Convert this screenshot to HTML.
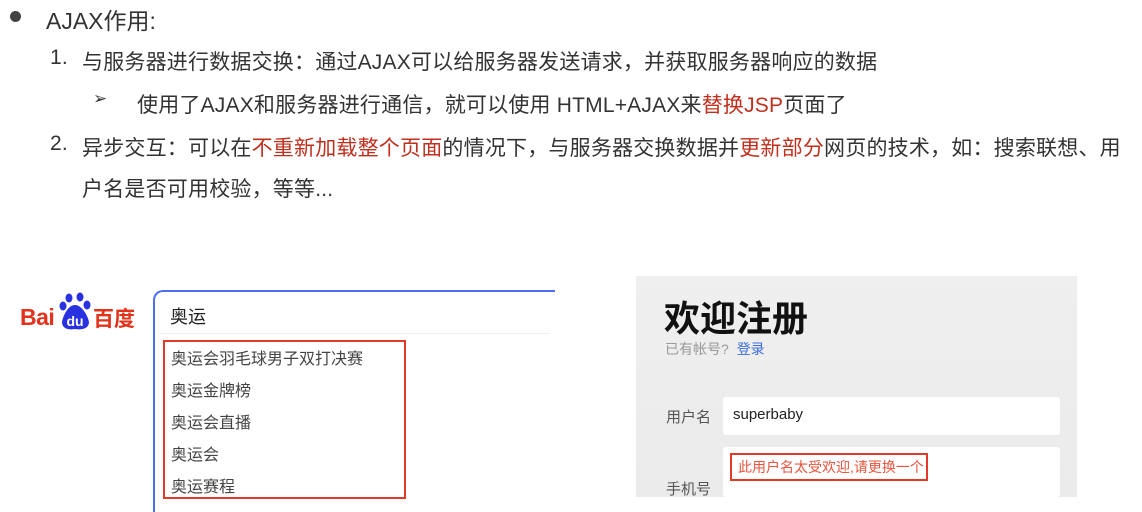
<!DOCTYPE html>
<html><head><meta charset="utf-8"><style>
body{margin:0;width:1142px;height:501px;background:#fff;position:relative;overflow:hidden;font-family:"Liberation Sans","Noto Sans CJK SC",sans-serif;color:#333}
.a{position:absolute;white-space:nowrap}
.t{font-size:21px;letter-spacing:0.2px}
.r{color:#c0301e}
</style></head><body>
<div class="a" style="left:10px;top:11px;width:11px;height:11px;border-radius:50%;background:#444"></div>
<div class="a" style="left:46px;top:2px;font-size:23px">AJAX作用:</div>
<div class="a t" style="left:50px;top:46px">1.</div>
<div class="a t" style="left:82px;top:46px">与服务器进行数据交换：通过AJAX可以给服务器发送请求，并获取服务器响应的数据</div>
<div class="a" style="left:93px;top:89px;font-size:17px">➢</div>
<div class="a t" style="left:137px;top:89px">使用了AJAX和服务器进行通信，就可以使用 HTML+AJAX来<span class="r">替换JSP</span>页面了</div>
<div class="a t" style="left:50px;top:132px">2.</div>
<div class="a t" style="left:82px;top:132px">异步交互：可以在<span class="r">不重新加载整个页面</span>的情况下，与服务器交换数据并<span class="r">更新部分</span>网页的技术，如：搜索联想、用</div>
<div class="a t" style="left:82px;top:173px">户名是否可用校验，等等...</div>

<!-- baidu -->
<div class="a" style="left:20px;top:304px;font-size:23px;font-weight:bold;color:#e3321c;letter-spacing:-0.5px">Bai</div>
<svg class="a" style="left:59px;top:292px" width="36" height="40" viewBox="0 0 36 40">
<ellipse cx="10" cy="6" rx="3.5" ry="4.5" fill="#2932e1"/><ellipse cx="21" cy="5" rx="3.5" ry="4.5" fill="#2932e1"/>
<ellipse cx="4" cy="14" rx="3.5" ry="4.5" fill="#2932e1"/><ellipse cx="28" cy="13" rx="3.5" ry="4.5" fill="#2932e1"/>
<path d="M16 13 C9 13 4 24 3 30 C3 37 10 38 16 37 C22 38 30 37 30 30 C29 24 23 13 16 13Z" fill="#2932e1"/>
<text x="16" y="34" text-anchor="middle" font-size="14" font-weight="bold" fill="#fff" font-family="Liberation Sans">du</text>
</svg>
<div class="a" style="left:93px;top:303px;font-size:21px;font-weight:bold;color:#e3321c">百度</div>

<div class="a" style="left:153px;top:290px;width:400px;height:220px;border:2px solid #4e6ef2;border-right:none;border-bottom:none;border-top-left-radius:10px"></div>
<div class="a" style="left:170px;top:303px;font-size:18px;color:#222">奥运</div>
<div class="a" style="left:160px;top:333px;width:390px;height:1px;background:#eee"></div>
<div class="a" style="left:163px;top:340px;width:239px;height:155px;border:2px solid #e23a28"></div>
<div class="a" style="left:171px;top:344px;font-size:16px;line-height:32px;color:#444;white-space:normal">奥运会羽毛球男子双打决赛<br>奥运金牌榜<br>奥运会直播<br>奥运会<br>奥运赛程</div>

<!-- register -->
<div class="a" style="left:636px;top:276px;width:441px;height:221px;background:linear-gradient(180deg,#efefef,#ebebeb)"></div>
<div class="a" style="left:664px;top:290px;font-size:36px;font-weight:bold;color:#111">欢迎注册</div>
<div class="a" style="left:665px;top:339px;font-size:14px;color:#999">已有帐号? <span style="color:#3b6fe0;margin-left:4px">登录</span></div>
<div class="a" style="left:666px;top:406px;font-size:15px;color:#555">用户名</div>
<div class="a" style="left:723px;top:397px;width:337px;height:38px;background:#fff;border-radius:3px"></div>
<div class="a" style="left:733px;top:406px;font-size:15px;color:#222">superbaby</div>
<div class="a" style="left:723px;top:447px;width:337px;height:50px;background:#fff;border-radius:3px"></div>
<div class="a" style="left:730px;top:453px;width:194px;height:24px;border:2px solid #e23a28"></div>
<div class="a" style="left:738px;top:457px;font-size:14px;color:#e8543e">此用户名太受欢迎,请更换一个</div>
<div class="a" style="left:666px;top:478px;font-size:15px;color:#555">手机号</div>
</body></html>
